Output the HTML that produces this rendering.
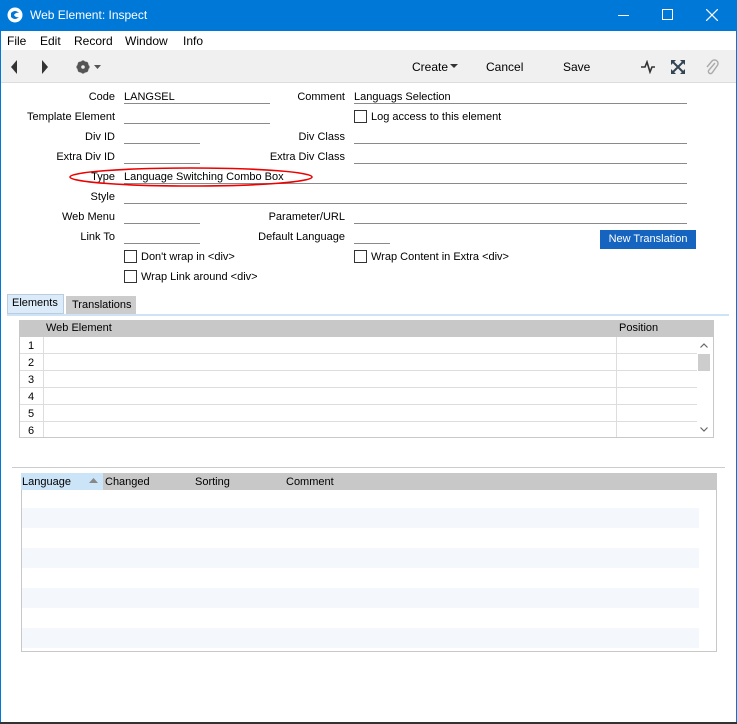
<!DOCTYPE html>
<html><head><style>
*{margin:0;padding:0;box-sizing:border-box}
body{width:737px;height:724px;position:relative;background:#fff;font-family:"Liberation Sans",sans-serif;font-size:11px;color:#000;overflow:hidden}
.a{position:absolute;white-space:nowrap}
.l{position:absolute;text-align:right;width:200px;white-space:nowrap}
.f{position:absolute;height:14px;border-bottom:1px solid #8a8a8a;white-space:nowrap;padding-top:1px;line-height:13px}
.cb{position:absolute;width:13px;height:13px;border:1px solid #333;background:#fff}
</style></head><body>
<div class="a" style="left:0;top:0;width:737px;height:31px;background:#0078d7"></div>
<svg class="a" style="left:7px;top:7px" width="16" height="16"><circle cx="8" cy="8" r="7.5" fill="#fff"/><path d="M4 6 Q8 2 12 6 Q9 5 7 8 Q9 11 12 10 Q8 14 4 10Z" fill="#0078d7"/></svg>
<div class="a" style="left:30px;top:8px;color:#fff;font-size:12px">Web Element: Inspect</div>
<div class="a" style="left:618px;top:15px;width:11px;height:1px;background:#fff"></div>
<div class="a" style="left:662px;top:9px;width:11px;height:11px;border:1px solid #fff"></div>
<svg class="a" style="left:706px;top:9px" width="12" height="12"><path d="M0 0L12 12M12 0L0 12" stroke="#fff" stroke-width="1.2"/></svg>
<div class="a" style="left:0;top:31px;width:1px;height:693px;background:#0078d7"></div>
<div class="a" style="left:736px;top:31px;width:1px;height:693px;background:#0078d7"></div>
<div class="a" style="left:0;top:722px;width:737px;height:2px;background:#333"></div>
<div class="a" style="left:7px;top:34px;font-size:12px">File</div>
<div class="a" style="left:40px;top:34px;font-size:12px">Edit</div>
<div class="a" style="left:74px;top:34px;font-size:12px">Record</div>
<div class="a" style="left:125px;top:34px;font-size:12px">Window</div>
<div class="a" style="left:183px;top:34px;font-size:12px">Info</div>
<div class="a" style="left:1px;top:50px;width:735px;height:33px;background:#f0f0f0;border-bottom:1px solid #ddd"></div>
<svg class="a" style="left:10px;top:60px" width="40" height="14"><path d="M7 0L1 7L7 14Z M32 0L38 7L32 14Z" fill="#333"/></svg>
<svg class="a" style="left:75px;top:58px" width="30" height="18"><circle cx="8" cy="9" r="4.5" fill="none" stroke="#555" stroke-width="3"/><path d="M8 2.5v13M1.5 9h13M3.4 4.4l9.2 9.2M12.6 4.4l-9.2 9.2" stroke="#555" stroke-width="2.4"/><circle cx="8" cy="9" r="4.5" fill="#555"/><circle cx="8" cy="9" r="1.8" fill="#f0f0f0"/><path d="M19 7h7l-3.5 4z" fill="#555"/></svg>
<div class="a" style="left:412px;top:60px;font-size:12px">Create</div>
<svg class="a" style="left:450px;top:64px" width="9" height="5"><path d="M0 0h8l-4 4z" fill="#333"/></svg>
<div class="a" style="left:486px;top:60px;font-size:12px">Cancel</div>
<div class="a" style="left:563px;top:60px;font-size:12px">Save</div>
<svg class="a" style="left:640px;top:60px" width="16" height="14"><path d="M1 7L5 7L7 2L10 12L12 7L15 7" fill="none" stroke="#333" stroke-width="1.6"/></svg>
<svg class="a" style="left:671px;top:60px" width="14" height="14"><path d="M1 1L13 13M13 1L1 13" stroke="#345" stroke-width="2"/><path d="M0 0h5L0 5zM14 0v5L9 0zM0 14v-5l5 5zM14 14h-5l5-5z" fill="#345"/></svg>
<svg class="a" style="left:705px;top:58px" width="14" height="18"><path d="M10 5L4 12a2 2 0 0 0 3 3L12 8a3.5 3.5 0 0 0-5-5L2 9" fill="none" stroke="#aaa" stroke-width="1.4"/></svg>

<div class="l" style="left:-85px;top:91px">Code</div>
<div class="f" style="left:124px;top:90px;width:146px">LANGSEL</div>
<div class="l" style="left:-85px;top:111px">Template Element</div>
<div class="f" style="left:124px;top:110px;width:146px"></div>
<div class="l" style="left:-85px;top:131px">Div ID</div>
<div class="f" style="left:124px;top:130px;width:76px"></div>
<div class="l" style="left:-85px;top:151px">Extra Div ID</div>
<div class="f" style="left:124px;top:150px;width:76px"></div>
<div class="l" style="left:-85px;top:171px">Type</div>
<div class="f" style="left:124px;top:170px;width:563px">Language Switching Combo Box</div>
<div class="l" style="left:-85px;top:191px">Style</div>
<div class="f" style="left:124px;top:190px;width:563px"></div>
<div class="l" style="left:-85px;top:211px">Web Menu</div>
<div class="f" style="left:124px;top:210px;width:76px"></div>
<div class="l" style="left:-85px;top:231px">Link To</div>
<div class="f" style="left:124px;top:230px;width:76px"></div>
<div class="cb" style="left:124px;top:250px"></div><div class="a" style="left:141px;top:251px">Don't wrap in &lt;div&gt;</div>
<div class="cb" style="left:124px;top:270px"></div><div class="a" style="left:141px;top:271px">Wrap Link around &lt;div&gt;</div>

<div class="l" style="left:145px;top:91px">Comment</div>
<div class="f" style="left:354px;top:90px;width:333px">Languags Selection</div>
<div class="cb" style="left:354px;top:110px"></div><div class="a" style="left:371px;top:111px">Log access to this element</div>
<div class="l" style="left:145px;top:131px">Div Class</div>
<div class="f" style="left:354px;top:130px;width:333px"></div>
<div class="l" style="left:145px;top:151px">Extra Div Class</div>
<div class="f" style="left:354px;top:150px;width:333px"></div>
<div class="l" style="left:145px;top:211px">Parameter/URL</div>
<div class="f" style="left:354px;top:210px;width:333px"></div>
<div class="l" style="left:145px;top:231px">Default Language</div>
<div class="f" style="left:354px;top:230px;width:36px"></div>
<div class="a" style="left:600px;top:230px;width:96px;height:19px;background:#1565c0;color:#fff;text-align:center;line-height:19px">New Translation</div>
<div class="cb" style="left:354px;top:250px"></div><div class="a" style="left:371px;top:251px">Wrap Content in Extra &lt;div&gt;</div>
<svg class="a" style="left:68px;top:166px" width="246" height="22"><ellipse cx="123" cy="11" rx="121" ry="9" fill="none" stroke="#e00" stroke-width="1.6"/></svg>

<div class="a" style="left:7px;top:294px;width:57px;height:20px;background:#dcebfa;border:1px solid #bcd"></div>
<div class="a" style="left:12px;top:297px">Elements</div>
<div class="a" style="left:66px;top:296px;width:70px;height:18px;background:#ccc"></div>
<div class="a" style="left:72px;top:299px">Translations</div>
<div class="a" style="left:7px;top:314px;width:722px;height:2px;background:#cfe3f7"></div>

<div class="a" style="left:19px;top:320px;width:695px;height:118px;border:1px solid #c8c8c8;background:#fff"></div>
<div class="a" style="left:19px;top:320px;width:695px;height:17px;background:#c8c8c8"></div>
<div class="a" style="left:46px;top:322px">Web Element</div>
<div class="a" style="left:619px;top:322px">Position</div>
<div class="a" style="left:43px;top:337px;width:1px;height:100px;background:#ddd"></div>
<div class="a" style="left:616px;top:337px;width:1px;height:100px;background:#ddd"></div>
<div class="a" style="left:20px;top:353px;width:677px;height:1px;background:#ddd"></div>
<div class="a" style="left:20px;top:370px;width:677px;height:1px;background:#ddd"></div>
<div class="a" style="left:20px;top:387px;width:677px;height:1px;background:#ddd"></div>
<div class="a" style="left:20px;top:404px;width:677px;height:1px;background:#ddd"></div>
<div class="a" style="left:20px;top:421px;width:677px;height:1px;background:#ddd"></div>
<div class="a" style="left:28px;top:340px">1</div>
<div class="a" style="left:28px;top:357px">2</div>
<div class="a" style="left:28px;top:374px">3</div>
<div class="a" style="left:28px;top:391px">4</div>
<div class="a" style="left:28px;top:408px">5</div>
<div class="a" style="left:28px;top:425px">6</div>
<div class="a" style="left:698px;top:354px;width:12px;height:17px;background:#cdcdcd"></div>
<svg class="a" style="left:700px;top:343px" width="8" height="5"><path d="M0.5 4.5L4 1L7.5 4.5" fill="none" stroke="#666" stroke-width="1.2"/></svg>
<svg class="a" style="left:700px;top:427px" width="8" height="5"><path d="M0.5 0.5L4 4L7.5 0.5" fill="none" stroke="#666" stroke-width="1.2"/></svg>

<div class="a" style="left:12px;top:467px;width:713px;height:1px;background:#ccc"></div>
<div class="a" style="left:21px;top:473px;width:696px;height:179px;border:1px solid #c8c8c8"></div>
<div class="a" style="left:21px;top:473px;width:696px;height:17px;background:#c8c8c8"></div>
<div class="a" style="left:21px;top:473px;width:82px;height:17px;background:#cce4f7"></div>
<div class="a" style="left:22px;top:476px">Language</div>
<svg class="a" style="left:89px;top:478px" width="9" height="5"><path d="M0 5h9L4.5 0z" fill="#888"/></svg>
<div class="a" style="left:105px;top:476px">Changed</div>
<div class="a" style="left:195px;top:476px">Sorting</div>
<div class="a" style="left:286px;top:476px">Comment</div>
<div class="a" style="left:22px;top:508px;width:677px;height:20px;background:#f4f8fc"></div>
<div class="a" style="left:22px;top:548px;width:677px;height:20px;background:#f4f8fc"></div>
<div class="a" style="left:22px;top:588px;width:677px;height:20px;background:#f4f8fc"></div>
<div class="a" style="left:22px;top:628px;width:677px;height:20px;background:#f4f8fc"></div>
</body></html>
